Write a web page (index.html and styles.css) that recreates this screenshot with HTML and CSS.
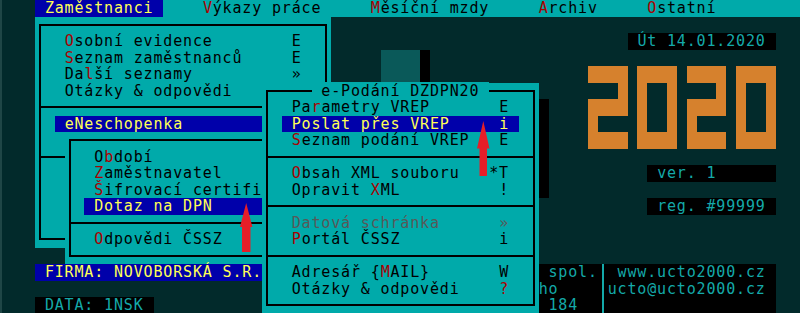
FILE: index.html
```html
<!DOCTYPE html>
<html lang="cs">
  <head>
    <meta charset="UTF-8">
    <title>Účto 2000 - Zaměstnanci</title>
    <link rel="stylesheet" href="styles.css">
  </head>
  <body>
    <div class="screen">
      <nav class="menubar">
        <span class="menu-item active">Zaměstnanci</span>
        <span class="menu-item"><b class="hk">V</b>ýkazy práce</span>
        <span class="menu-item"><b class="hk">M</b>ěsíční mzdy</span>
        <span class="menu-item"><b class="hk">A</b>rchiv</span>
        <span class="menu-item"><b class="hk">O</b>statní</span>
      </nav>

      <!-- right side of the desktop -->
      <div class="stamp date">Út 14.01.2020</div>
      <div class="logo">
        <div class="digit two"><i class="hole"></i><i class="hole"></i></div>
        <div class="digit zero"><i class="hole"></i></div>
        <div class="digit two"><i class="hole"></i><i class="hole"></i></div>
        <div class="digit zero"><i class="hole"></i></div>
      </div>
      <div class="stamp ver">ver. 1</div>
      <div class="stamp reg">reg. #99999</div>

      <div class="shade"></div>
      <div class="shadow-a"></div>
      <div class="shadow-b"></div>

      <div class="info">
        <div>
          <div class="line"> spol.</div>
          <div class="line">ho</div>
          <div class="line"> 184</div>
        </div>
        <div class="vline"></div>
        <div>
          <div class="line"> www.ucto2000.cz</div>
          <div class="line">ucto@ucto2000.cz</div>
        </div>
      </div>

      <div class="firma">FIRMA: NOVOBORSKÁ S.R.O.</div>
      <div class="data">DATA: 1NSK</div>

      <!-- Zaměstnanci dropdown -->
      <div class="box dropdown">
        <div class="item"><span class="label"><b class="hk">O</b>sobní evidence</span><span class="key">E</span></div>
        <div class="item"><span class="label"><b class="hk">S</b>eznam zaměstnanců</span><span class="key">E</span></div>
        <div class="item"><span class="label">Da<b class="hk">l</b>ší seznamy</span><span class="key">»</span></div>
        <div class="item"><span class="label">Otázky &amp; odpovědi</span></div>
        <div class="sep"></div>
        <div class="item sel"><span class="label">eNeschopenka</span></div>
        <div class="item"></div>
        <div class="sep"></div>
        <div class="item"></div>
        <div class="item"></div>
        <div class="item"></div>
        <div class="item"></div>
      </div>

      <!-- eNeschopenka submenu -->
      <div class="box submenu">
        <div class="item"><span class="label">O<b class="hk">b</b>dobí</span></div>
        <div class="item"><span class="label"><b class="hk">Z</b>aměstnavatel</span></div>
        <div class="item"><span class="label"><b class="hk">Š</b>ifrovací certifikát</span></div>
        <div class="item sel"><span class="label">Dotaz na DPN</span></div>
        <div class="sep"></div>
        <div class="item"><span class="label"><b class="hk">O</b>dpovědi ČSSZ</span></div>
        <svg class="arrow arrow-dpn" width="13" height="49" viewBox="0 0 13 49">
          <polygon points="6.2,0 12.4,24 10.5,24 10.5,49 2,49 2,24 0,24"/>
        </svg>
      </div>

      <!-- e-Podání submenu -->
      <div class="box podani">
        <div class="title"><span> e-Podání DZDPN20 </span></div>
        <div class="item"><span class="label">Pa<b class="hk">r</b>ametry VREP</span><span class="key">E</span></div>
        <div class="item sel"><span class="label">Poslat přes VREP</span><span class="key">i</span></div>
        <div class="item"><span class="label"><b class="hk">S</b>eznam podání VREP</span><span class="key">E</span></div>
        <div class="sep"></div>
        <div class="item"><span class="label"><b class="hk">O</b>bsah XML souboru</span><span class="key">*T</span></div>
        <div class="item"><span class="label">Opravit <b class="hk">X</b>ML</span><span class="key">!</span></div>
        <div class="sep"></div>
        <div class="item dis"><span class="label">Datová schránka</span><span class="key">»</span></div>
        <div class="item"><span class="label"><b class="hk">P</b>ortál ČSSZ</span><span class="key">i</span></div>
        <div class="sep"></div>
        <div class="item"><span class="label">Adresář {<b class="hk">M</b>AIL}</span><span class="key">W</span></div>
        <div class="item"><span class="label">Otázky &amp; odpovědi</span><span class="key hk">?</span></div>
        <svg class="arrow arrow-vrep" width="13" height="55" viewBox="0 0 13 55">
          <polygon points="6.3,0 12.5,27.5 10,27.5 10,55 2.5,55 2.5,27.5 0,27.5"/>
        </svg>
      </div>
    </div>
  </body>
</html>
```

FILE: styles.css
```css
:root {
  --cw: 9.875px;
  --rh: 16.5px;
  --bg: #022a2b;
  --cyan: #00aaaa;
  --ink: #14a9a9;
  --blue: #0000aa;
  --yellow: #ffff55;
  --red: #aa0000;
  --orange: #d6812d;
}
html, body {
  height: 100%;
}
body {
  margin: 0;
  background: var(--bg);
  overflow: hidden;
  font-family: "DejaVu Sans Mono", monospace;
  font-size: 15px;
  line-height: var(--rh);
  letter-spacing: 0.844px;
  color: #000;
  box-shadow: inset 2px 0 0 #1f4646;
}

/* 80x19 text mode grid */
.screen {
  display: grid;
  grid-template-columns: repeat(80, var(--cw));
  grid-template-rows: repeat(19, var(--rh));
  margin-left: 35px;
}

.menubar {
  grid-column: 1 / -1;
  grid-row: 1;
  display: flex;
  gap: calc(var(--cw) * 3);
  background: var(--cyan);
}
.menu-item { padding: 0 var(--cw); white-space: pre; }
.menu-item.active { background: var(--blue); color: var(--yellow); }
.hk { font-weight: normal; color: var(--red); }

/* windows */
.box {
  position: relative;
  background: var(--cyan);
  padding-top: var(--rh);
}
.box::before {
  content: "";
  position: absolute;
  top: calc(var(--rh) / 2 - 1px);
  bottom: calc(var(--rh) / 2 - 1px);
  left: calc(var(--cw) / 2 - 1px);
  right: calc(var(--cw) / 2 - 1px);
  border: 2px solid #000;
}
.dropdown { grid-column: 1 / 31; grid-row: 2 / 16; }
.submenu { grid-column: 4 / 32; grid-row: 9 / 17; }
.podani { grid-column: 24 / 52; grid-row: 6 / 20; padding-top: 0; z-index: 2; }

.title { height: var(--rh); padding-left: calc(var(--cw) * 5); }
.title span { position: relative; background: var(--cyan); white-space: pre; }

.item {
  display: flex;
  height: var(--rh);
  margin: 0 calc(var(--cw) * 2);
  padding: 0 var(--cw);
  white-space: pre;
}
.item .label { flex: 1; }
.item.sel { background: var(--blue); color: var(--yellow); }
.item.dis { color: #585858; }

.sep { position: relative; height: var(--rh); }
.sep::after {
  content: "";
  position: absolute;
  left: calc(var(--cw) / 2 - 1px);
  right: calc(var(--cw) / 2 - 1px);
  top: calc(var(--rh) / 2 - 1px);
  height: 2px;
  background: #000;
}

.arrow { position: absolute; fill: #e61e28; }
.arrow-dpn { left: 175.4px; top: 70.7px; }
.arrow-vrep { left: 214.4px; top: 38.2px; }

/* desktop pieces */
.shade { grid-column: 36 / 40; grid-row: 4 / 6; background: #0a5959; }
.shadow-a { grid-column: 40 / 41; grid-row: 4 / 6; background: #000; }
.shadow-b { grid-column: 52 / 53; grid-row: 7 / 13; background: #000; }

.firma {
  position: relative;
  z-index: 1;
  grid-column: 1 / 30;
  grid-row: 17;
  background: var(--blue);
  color: var(--yellow);
  padding-left: var(--cw);
  white-space: pre;
}
.data {
  grid-column: 1 / 13;
  grid-row: 19;
  background: #000;
  color: var(--ink);
  padding-left: var(--cw);
  white-space: pre;
}

.info {
  grid-column: 52 / 76;
  grid-row: 17 / 20;
  display: grid;
  grid-template-columns: calc(var(--cw) * 6) var(--cw) 1fr;
  background: #000;
  color: var(--ink);
}
.info .line { height: var(--rh); white-space: pre; }
.vline { border-left: 2px solid; margin-left: calc(var(--cw) / 2 - 1px); }

.stamp {
  background: #000;
  color: var(--ink);
  padding-left: var(--cw);
  white-space: pre;
}
.date { grid-column: 61 / 76; grid-row: 3; }
.ver { grid-column: 63 / 76; grid-row: 11; }
.reg { grid-column: 63 / 76; grid-row: 13; }

/* 2020 made of block cells */
.logo {
  grid-column: 57 / 76;
  grid-row: 5 / 10;
  display: grid;
  grid-template-columns: repeat(4, calc(var(--cw) * 4));
  column-gap: var(--cw);
}
.digit {
  display: grid;
  grid-template-columns: repeat(4, var(--cw));
  grid-template-rows: repeat(5, var(--rh));
  background: var(--orange);
}
.hole { background: var(--bg); }
.two .hole:first-child { grid-column: 1 / 4; grid-row: 2; }
.two .hole:last-child { grid-column: 2 / 5; grid-row: 4; }
.zero .hole { grid-column: 2 / 4; grid-row: 2 / 5; }
```
